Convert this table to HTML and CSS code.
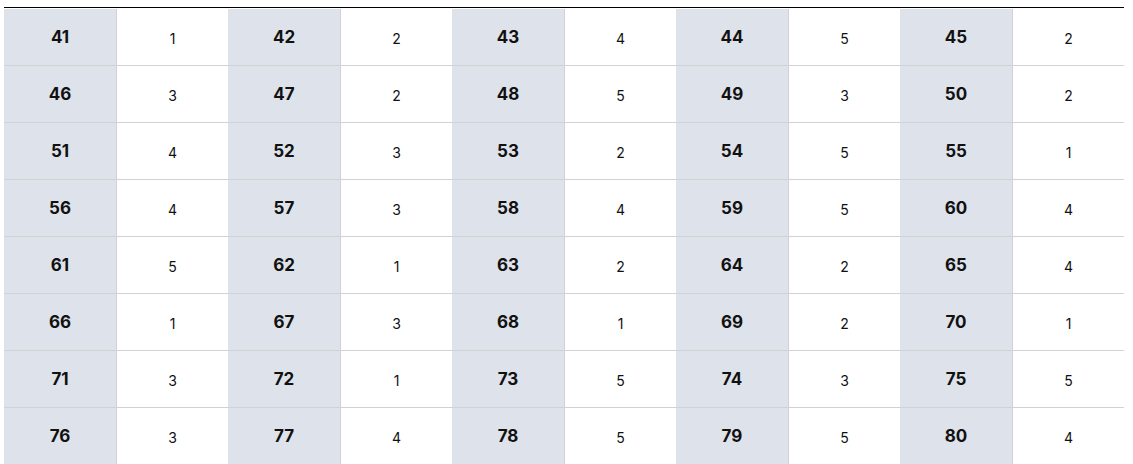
FILE: index.html
```html
<!DOCTYPE html>
<html>
<head>
<meta charset="utf-8">
<link rel="stylesheet" href="styles.css">
</head>
<body>
<div class="grid">
<div class="key">41</div><div class="val">1</div><div class="key">42</div><div class="val">2</div><div class="key">43</div><div class="val">4</div><div class="key">44</div><div class="val">5</div><div class="key">45</div><div class="val">2</div>
<div class="key">46</div><div class="val">3</div><div class="key">47</div><div class="val">2</div><div class="key">48</div><div class="val">5</div><div class="key">49</div><div class="val">3</div><div class="key">50</div><div class="val">2</div>
<div class="key">51</div><div class="val">4</div><div class="key">52</div><div class="val">3</div><div class="key">53</div><div class="val">2</div><div class="key">54</div><div class="val">5</div><div class="key">55</div><div class="val">1</div>
<div class="key">56</div><div class="val">4</div><div class="key">57</div><div class="val">3</div><div class="key">58</div><div class="val">4</div><div class="key">59</div><div class="val">5</div><div class="key">60</div><div class="val">4</div>
<div class="key">61</div><div class="val">5</div><div class="key">62</div><div class="val">1</div><div class="key">63</div><div class="val">2</div><div class="key">64</div><div class="val">2</div><div class="key">65</div><div class="val">4</div>
<div class="key">66</div><div class="val">1</div><div class="key">67</div><div class="val">3</div><div class="key">68</div><div class="val">1</div><div class="key">69</div><div class="val">2</div><div class="key">70</div><div class="val">1</div>
<div class="key">71</div><div class="val">3</div><div class="key">72</div><div class="val">1</div><div class="key">73</div><div class="val">5</div><div class="key">74</div><div class="val">3</div><div class="key">75</div><div class="val">5</div>
<div class="key">76</div><div class="val">3</div><div class="key">77</div><div class="val">4</div><div class="key">78</div><div class="val">5</div><div class="key">79</div><div class="val">5</div><div class="key">80</div><div class="val">4</div>
</div>
</body>
</html>
```
FILE: styles.css
```css
html, body {
  margin: 0;
  padding: 0;
  background: #ffffff;
}
body {
  padding: 7px 0 0 4px;
  font-family: Inter, "Noto Sans", sans-serif;
  color: #111111;
  overflow: hidden;
}
.grid {
  width: 1120px;
  border-top: 1px solid #000;
  padding-top: 1px;
  display: grid;
  grid-template-columns: repeat(5, 113px 111px);
  grid-auto-rows: 57px;
}
.key, .val {
  display: flex;
  align-items: center;
  justify-content: center;
  border-bottom: 1px solid #d2d2d2;
  box-sizing: border-box;
}
.key {
  background: #dee2ea;
  border-right: 1px solid #d2d2d2;
  font-weight: 700;
  font-size: 17px;
}
.val {
  font-size: 14px;
  padding-top: 2px;
}
```
